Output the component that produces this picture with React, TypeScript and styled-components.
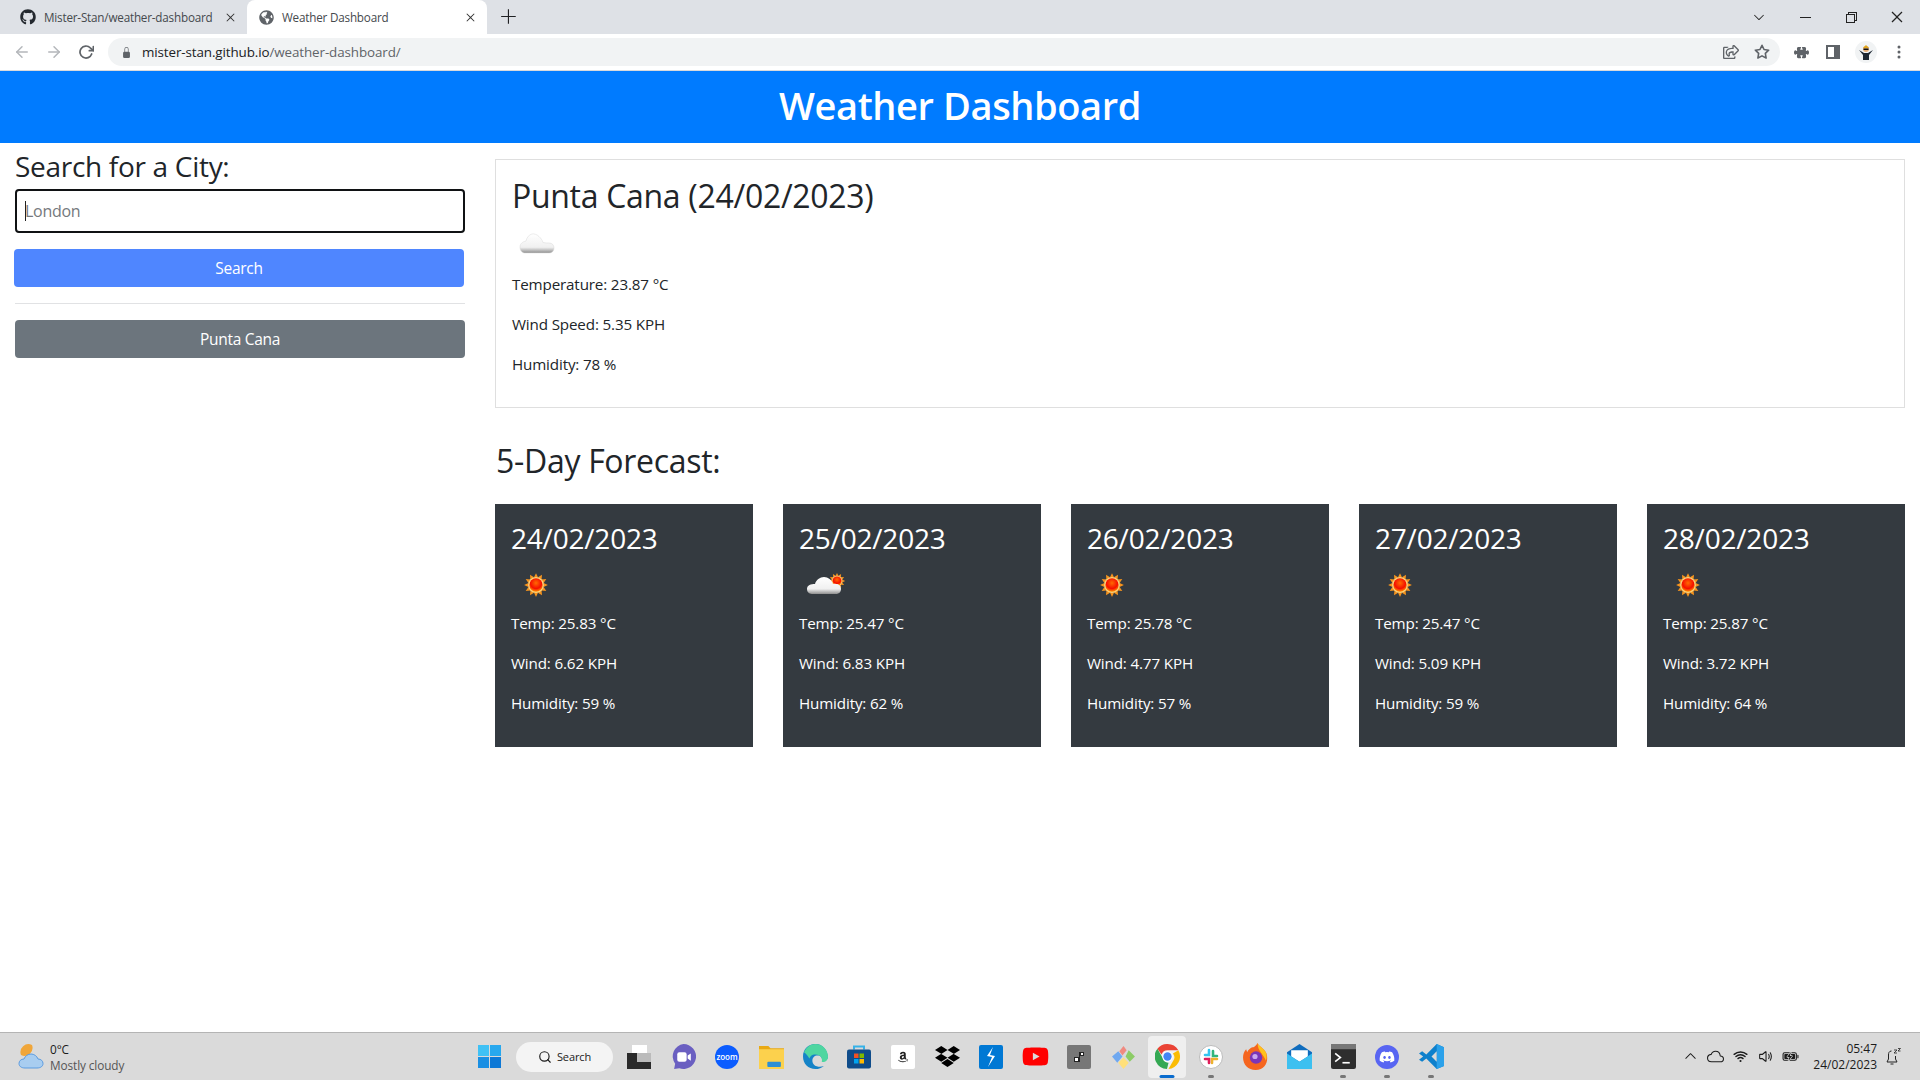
import React from 'react';
import styled, { createGlobalStyle } from 'styled-components';
import { FaGithub, FaDiscord, FaDropbox, FaYoutube, FaAmazon, FaGlobeAmericas, FaRegShareSquare } from 'react-icons/fa';
import { FiArrowLeft, FiArrowRight, FiRotateCw, FiStar, FiSearch } from 'react-icons/fi';
import { BsLockFill, BsPuzzleFill, BsThreeDotsVertical } from 'react-icons/bs';
import { VscChevronDown, VscChromeMinimize, VscChromeRestore, VscChromeClose, VscClose, VscAdd, VscChevronUp } from 'react-icons/vsc';
import { IoWifi, IoVolumeMediumOutline, IoCloudOutline, IoBatteryChargingOutline } from 'react-icons/io5';

const forecast = [
  { date: '24/02/2023', icon: 'sun', temp: '25.83', wind: '6.62', humidity: '59' },
  { date: '25/02/2023', icon: 'few', temp: '25.47', wind: '6.83', humidity: '62' },
  { date: '26/02/2023', icon: 'sun', temp: '25.78', wind: '4.77', humidity: '57' },
  { date: '27/02/2023', icon: 'sun', temp: '25.47', wind: '5.09', humidity: '59' },
  { date: '28/02/2023', icon: 'sun', temp: '25.87', wind: '3.72', humidity: '64' },
];

const GlobalStyle = createGlobalStyle`
  * { box-sizing: border-box; }
  html, body { margin: 0; padding: 0; background: #fff; }
  body {
    font-family: "Open Sans", "Noto Sans", "Liberation Sans", sans-serif;
    color: #212529;
    overflow: hidden;
  }
`;

const Screen = styled.div`
  width: 1920px;
  height: 1080px;
  display: flex;
  flex-direction: column;
`;

/* browser chrome */
const TabStrip = styled.div`
  height: 34px;
  background: #dee1e6;
  display: flex;
  align-items: flex-end;
  padding-left: 8px;
  flex: none;
`;

const Tab = styled.div<{ $active?: boolean }>`
  width: ${(p) => (p.$active ? 240 : 239)}px;
  height: 34px;
  padding: 0 9px 0 12px;
  display: flex;
  align-items: center;
  gap: 8px;
  font-size: 11.7px;
  letter-spacing: -0.2px;
  border-radius: 8px 8px 0 0;
  background: ${(p) => (p.$active ? '#fff' : 'transparent')};
  color: #45494d;
`;

const TabTitle = styled.span`
  flex: 1;
  white-space: nowrap;
  padding-bottom: 1px;
`;

const NewTab = styled.div`
  width: 44px;
  height: 34px;
  display: flex;
  align-items: center;
  justify-content: center;
  font-size: 18px;
  color: #202124;
`;

const WindowControls = styled.div`
  margin-left: auto;
  height: 34px;
  display: flex;
  align-items: center;
  color: #222;
  font-size: 16px;
`;

const WindowButton = styled.div`
  width: 46px;
  display: flex;
  justify-content: center;
`;

const Toolbar = styled.div`
  height: 37px;
  background: #fff;
  border-bottom: 1px solid #d8dadd;
  display: flex;
  align-items: center;
  padding: 0 0 0 6px;
  color: #5f6368;
  flex: none;
`;

const NavButton = styled.div<{ $muted?: boolean }>`
  width: 32px;
  display: flex;
  justify-content: center;
  font-size: 18px;
  color: ${(p) => (p.$muted ? '#b4b7bb' : '#5f6368')};
`;

const Omnibox = styled.div`
  width: 1672px;
  height: 28px;
  margin-left: 6px;
  padding: 0 10px 0 13px;
  border-radius: 14px;
  background: #f1f3f4;
  display: flex;
  align-items: center;
  font-size: 13.4px;
  letter-spacing: -0.1px;
  gap: 10px;
`;

const UrlHost = styled.span`
  color: #202124;
`;

const UrlPath = styled.span`
  color: #5f6368;
`;

const OmniActions = styled.div`
  margin-left: auto;
  display: flex;
  align-items: center;
  gap: 15px;
  font-size: 16px;
  color: #5f6368;
`;

const ToolIcons = styled.div`
  display: flex;
  align-items: center;
  margin-left: 14px;
  gap: 16px;
`;

const PanelIcon = styled.div`
  width: 14px;
  height: 14px;
  margin-left: 1px;
  background: #fff;
  border: 2px solid #5f6368;
  border-right-width: 6px;
`;

const Avatar = styled.div`
  width: 22px;
  height: 22px;
  margin: 0 -2px 0 -1px;
  border-radius: 50%;
  background: #f1f3f4;
  display: flex;
  align-items: center;
  justify-content: center;
`;

/* page */
const PageHeader = styled.header`
  height: 72px;
  padding-bottom: 4px;
  background: #007bff;
  color: #fff;
  display: flex;
  align-items: center;
  justify-content: center;
  flex: none;
`;

const PageTitle = styled.h1`
  margin: 0;
  font-size: 38px;
  font-weight: 600;
  letter-spacing: -0.4px;
`;

const Content = styled.main`
  flex: 1;
  display: flex;
  gap: 30px;
  padding: 6px 15px 0;
`;

const Sidebar = styled.aside`
  width: 450px;
  flex: none;
  display: flex;
  flex-direction: column;
`;

const SideHeading = styled.h3`
  margin: 0 0 6px;
  font-size: 28px;
  line-height: 34px;
  font-weight: 500;
  letter-spacing: -0.3px;
`;

const CityInput = styled.div`
  height: 44px;
  border: 2px solid #101214;
  border-radius: 4px;
  padding: 0 8px;
  display: flex;
  align-items: center;
  font-size: 16px;
  letter-spacing: -0.3px;
  color: #75797d;
`;

const Caret = styled.span`
  width: 1px;
  height: 20px;
  background: #222;
  margin-right: -1px;
`;

const ActionButton = styled.div<{ $bg: string; $nudge?: boolean }>`
  height: 38px;
  border-radius: 4px;
  background: ${(p) => p.$bg};
  color: #fff;
  display: flex;
  align-items: center;
  justify-content: center;
  font-size: 15.5px;
  letter-spacing: -0.3px;
  margin-left: ${(p) => (p.$nudge ? '-1px' : '0')};
  margin-right: ${(p) => (p.$nudge ? '1px' : '0')};
`;

const SearchGap = styled.div`
  height: 16px;
`;

const Rule = styled.hr`
  border: 0;
  border-top: 1px solid #e1e2e4;
  margin: 16px 0;
  height: 0;
`;

const MainColumn = styled.section`
  flex: 1;
  padding-top: 10px;
`;

const CurrentCard = styled.div`
  height: 249px;
  border: 1px solid #dfdfdf;
  padding: 16px;
`;

const CurrentTitle = styled.h2`
  margin: 1px 0 0;
  font-size: 32px;
  line-height: 38px;
  font-weight: 500;
  letter-spacing: -0.3px;
`;

const IconSlot = styled.div<{ $top: number }>`
  height: 50px;
  width: 50px;
  margin-top: ${(p) => p.$top}px;
`;

const Stat = styled.p<{ $lead?: number }>`
  margin: ${(p) => p.$lead ?? 16}px 0 0;
  font-size: 15.2px;
  line-height: 24px;
  letter-spacing: -0.15px;
`;

const ForecastHeading = styled.h3`
  margin: 34px 0 0 1px;
  font-size: 32px;
  line-height: 38px;
  font-weight: 500;
  letter-spacing: -0.3px;
`;

const ForecastRow = styled.div`
  margin-top: 24px;
  display: grid;
  grid-template-columns: repeat(5, 258px);
  gap: 30px;
`;

const ForecastCard = styled.div`
  height: 243px;
  padding: 16px;
  background: #343a40;
  color: #fff;
`;

const ForecastDate = styled.h4`
  margin: 1px 0 0;
  font-size: 28px;
  line-height: 34px;
  font-weight: 500;
  letter-spacing: -0.2px;
`;

/* taskbar */
const Taskbar = styled.footer`
  height: 48px;
  flex: none;
  background: #dadada;
  border-top: 1px solid #b4b4b4;
  display: flex;
  align-items: center;
  color: #1b1b1b;
`;

const WeatherWidget = styled.div`
  width: 478px;
  padding-left: 18px;
  display: flex;
  align-items: center;
  gap: 6px;
`;

const WidgetText = styled.div`
  font-size: 11.8px;
  line-height: 16px;
  letter-spacing: -0.1px;
`;

const WidgetSub = styled.div`
  color: #555;
`;

const SearchPill = styled.div`
  width: 97px;
  height: 30px;
  margin: 0 4px 0 15px;
  border-radius: 15px;
  background: #f4f4f4;
  display: flex;
  align-items: center;
  justify-content: center;
  gap: 5px;
  font-size: 11px;
  letter-spacing: -0.1px;
`;

const AppSlot = styled.div<{ $active?: boolean }>`
  width: 38px;
  height: 42px;
  margin: 0 3px;
  border-radius: 4px;
  background: ${(p) => (p.$active ? '#efefef' : 'transparent')};
  display: flex;
  align-items: center;
  justify-content: center;
  position: relative;
`;

const RunDot = styled.span<{ $active?: boolean }>`
  position: absolute;
  bottom: 0;
  left: 50%;
  transform: translateX(-50%);
  width: ${(p) => (p.$active ? 15 : 6)}px;
  height: 3px;
  border-radius: 2px;
  background: ${(p) => (p.$active ? '#0a6cce' : '#777')};
`;

const Tray = styled.div`
  margin-left: auto;
  display: flex;
  align-items: center;
  gap: 8px;
  padding-right: 19px;
`;

const Clock = styled.div`
  margin-left: 6px;
  font-size: 12px;
  line-height: 16px;
  text-align: right;
`;

const Swatch = styled.div<{ $bg: string; $round?: boolean }>`
  width: 24px;
  height: 24px;
  border-radius: ${(p) => (p.$round ? '50%' : '2px')};
  background: ${(p) => p.$bg};
  color: #fff;
  display: flex;
  align-items: center;
  justify-content: center;
  font-size: 8px;
  font-weight: 600;
`;

const WeatherDefs = () => (
  <defs>
    <linearGradient id="cloudFill" x1="0" y1="0" x2="0" y2="1">
      <stop offset="0" stopColor="#ffffff" />
      <stop offset="0.7" stopColor="#f0f0f0" />
      <stop offset="1" stopColor="#8f8f8f" />
    </linearGradient>
    <radialGradient id="sunFill" cx="0.5" cy="0.35" r="0.7">
      <stop offset="0" stopColor="#ff6a00" />
      <stop offset="0.6" stopColor="#f50f00" />
      <stop offset="1" stopColor="#ffb000" />
    </radialGradient>
  </defs>
);

const rays = Array.from({ length: 12 }, (_, i) => i * 30);

const Sun = ({ x, y, s }: { x: number; y: number; s: number }) => (
  <g transform={`translate(${x} ${y}) scale(${s})`}>
    {rays.map((a) => (
      <polygon key={a} points="-2.2,-8 0,-12.5 2.2,-8" fill="#f7941d" transform={`rotate(${a})`} />
    ))}
    <circle r="8.4" fill="#ffd27a" />
    <circle r="7" fill="url(#sunFill)" />
  </g>
);

const WeatherIcon = ({ kind }: { kind: string }) => (
  <svg width="50" height="50" viewBox="0 0 50 50">
    <WeatherDefs />
    {kind === 'sun' && <Sun x={25} y={25} s={0.95} />}
    {kind === 'few' && (
      <>
        <Sun x={38} y={21} s={0.65} />
        <path
          d="M14 34h22c4 0 6-2 6-5s-2-5-5-5c-1-.3-2-.3-3 0-1-4-5-7-9-7s-8 3-9 7c-4 0-8 1-8 5s3 5 6 5z"
          fill="url(#cloudFill)"
        />
      </>
    )}
    {kind === 'cloud' && (
      <path
        d="M13 33h24c3 0 5-2 5-5s-2-5-5-5c-2 0-4 0-6-.5-1-3-2-4-4-6-2-2-5-3-7-2.500-3 .8-5 3-6 7-3 .5-6 2.500-6 6s2 6 5 6z"
        fill="url(#cloudFill)"
        stroke="#d9d9d9"
        strokeWidth=".5"
      />
    )}
  </svg>
);

const WinLogo = () => (
  <svg width="23" height="23" viewBox="0 0 23 23">
    <rect x="0" y="0" width="11" height="11" fill="#3fc1f5" />
    <rect x="12" y="0" width="11" height="11" fill="#28a8ee" />
    <rect x="0" y="12" width="11" height="11" fill="#1a8fe3" />
    <rect x="12" y="12" width="11" height="11" fill="#0d78d6" />
  </svg>
);

const ChromeLogo = () => (
  <svg width="25" height="25" viewBox="0 0 24 24">
    <path d="M12 0a12 12 0 0 1 10.400 6H12a6 6 0 0 0-5.700 4.100L2.300 4.600A12 12 0 0 1 12 0z" fill="#ea4335" />
    <path d="M22.400 6A12 12 0 0 1 12.900 24l4.300-7.500A6 6 0 0 0 17.200 9z" fill="#fbbc05" />
    <path d="M2.300 4.600l5.100 8.900A5 5 0 0 0 13 17.900L11.500 24A12 12 0 0 1 2.300 4.600z" fill="#34a853" />
    <circle cx="12" cy="12" r="5" fill="#fff" />
    <circle cx="12" cy="12" r="4" fill="#4285f4" />
  </svg>
);

const EdgeLogo = () => (
  <svg width="25" height="25" viewBox="0 0 24 24">
    <path d="M12 0C5 0 0 5 0 12c0 7 5 12 12 12 3 0 6-1 8-3-5 2-11 0-11-5 0-3 2-5 5-5 3 0 4 2 4 3h6c0-8-5-14-12-14z" fill="#1583c7" />
    <path d="M1 8C3 3 7 0 12 0c7 0 12 6 12 12 0 4-3 6-6 5 1-3-1-7-6-7-4 0-5 2-6 4C4 10 2 9 1 8z" fill="#4fd6a0" />
  </svg>
);

const FolderLogo = () => (
  <svg width="25" height="25" viewBox="0 0 24 24">
    <path d="M0 2h9l2 2h13v20H0z" fill="#e9a914" />
    <rect x="0" y="5" width="24" height="19" fill="#fcd14d" />
    <rect x="8" y="17" width="13" height="5" rx="1" fill="#2d8fd5" />
  </svg>
);

const StoreLogo = () => (
  <svg width="24" height="25" viewBox="0 0 24 24">
    <path d="M7 5V2h10v3" fill="none" stroke="#37b2e8" strokeWidth="2" />
    <rect x="0" y="5" width="24" height="19" rx="2" fill="#0f4c8a" />
    <rect x="7" y="9" width="4.500" height="4.500" fill="#f25022" />
    <rect x="12.500" y="9" width="4.500" height="4.500" fill="#7fba00" />
    <rect x="7" y="14.500" width="4.500" height="4.500" fill="#00a4ef" />
    <rect x="12.500" y="14.500" width="4.500" height="4.500" fill="#ffb900" />
  </svg>
);

const MeetLogo = () => (
  <svg width="25" height="25" viewBox="0 0 24 24">
    <path d="M12 0a12 12 0 1 1-4 23.300L3 24l1-5A12 12 0 0 1 12 0z" fill="#6a5fc1" />
    <rect x="6" y="8" width="9" height="9" rx="2" fill="#fff" />
    <path d="M16 11l3-2v7l-3-2z" fill="#fff" />
  </svg>
);

const GemLogo = () => (
  <svg width="25" height="25" viewBox="0 0 24 24">
    <path d="M8 7l4-5 3 4-4 5z" fill="#f08a80" />
    <path d="M1 12l6-5 4 5-5 6z" fill="#6fa8f0" />
    <path d="M17 6l6 6-5 5-4-5z" fill="#8ccc66" />
    <path d="M7 18l5-5 5 5-5 6z" fill="#ffe07a" />
  </svg>
);

const MailLogo = () => (
  <svg width="25" height="25" viewBox="0 0 24 24">
    <path d="M0 8l12-8 12 8v16H0z" fill="#0f6cbd" />
    <path d="M4 6h16v6l-8 5-8-5z" fill="#fff" />
    <path d="M0 9l12 8 12-8v15H0z" fill="#3dc0f0" />
  </svg>
);

const TerminalLogo = () => (
  <svg width="25" height="25" viewBox="0 0 24 24">
    <rect width="24" height="24" rx="2" fill="#2e2e2e" />
    <rect width="24" height="5" fill="#777" />
    <path d="M4 9l5 4-5 4" stroke="#fff" strokeWidth="1.600" fill="none" />
    <path d="M11 18h7" stroke="#fff" strokeWidth="1.600" />
  </svg>
);

const VscodeLogo = () => (
  <svg width="25" height="25" viewBox="0 0 24 24">
    <path d="M17 0l7 3v18l-7 3-10-10-4 3-3-2 4-3-4-3 3-2 4 3z" fill="#0e80cc" />
    <path d="M17 0l7 3v18l-7 3z" fill="#2ba1ea" />
    <path d="M17 7l-5 5 5 5z" fill="#dadada" />
  </svg>
);

const TaskViewLogo = () => (
  <svg width="24" height="24" viewBox="0 0 24 24">
    <rect x="0" y="8" width="24" height="16" fill="#2a2a2a" />
    <path d="M5 0h15v8H5z" fill="#fff" />
    <path d="M10 8h14v9H10z" fill="#bbb" />
  </svg>
);

const SlackLogo = () => (
  <svg width="24" height="24" viewBox="0 0 24 24">
    <circle cx="12" cy="12" r="11.500" fill="#fff" stroke="#bbb" />
    <path d="M10 5v5H6" fill="none" stroke="#36c5f0" strokeWidth="2.600" strokeLinecap="round" />
    <path d="M14 6v5h4" fill="none" stroke="#2eb67d" strokeWidth="2.600" strokeLinecap="round" />
    <path d="M18 14h-5v4" fill="none" stroke="#ecb22e" strokeWidth="2.600" strokeLinecap="round" />
    <path d="M6 14h4v4" fill="none" stroke="#e01e5a" strokeWidth="2.600" strokeLinecap="round" />
  </svg>
);

const FirefoxLogo = () => (
  <svg width="25" height="27" viewBox="0 0 24 26">
    <path d="M14 0c1 3 6 5 8 9 3 6 1 17-10 17C5 26 0 21 0 14c0-3 1-6 3-8l1 3c1-3 4-5 6-5 1 0 3-2 4-4z" fill="#f5651f" />
    <path d="M14 0c1 3 6 5 8 9 1 3 1 6 0 8-2-6-8-9-8-17z" fill="#ffc21c" />
    <circle cx="12.500" cy="14" r="6" fill="#7a35b8" />
    <circle cx="11.500" cy="13" r="2.500" fill="#c9a6f0" />
  </svg>
);

const StanLogo = () => (
  <Swatch $bg="#0078d4">
    <svg width="12" height="20" viewBox="0 0 12 20">
      <path d="M8 0L2 9l5 1-4 10 7-11-5-1z" fill="#fff" />
    </svg>
  </Swatch>
);

const GreyLogo = () => (
  <Swatch $bg="#777">
    <svg width="10" height="10" viewBox="0 0 10 10">
      <path d="M0 5h5V0h5v4H6v6H0z" fill="#222" />
      <path d="M1 6h3v3H1zM7 1h2v2H7z" fill="#fff" />
    </svg>
  </Swatch>
);

const SnoozeBell = () => (
  <svg width="16" height="18" viewBox="0 0 16 18" fill="none" stroke="#222" strokeWidth="1">
    <path d="M6.500 3C4 3 3.500 5 3.500 7v4L2 14h10l-1.500-3V8" />
    <path d="M5.500 16h3" />
    <path d="M9 2h3l-3 3h3M13 .5h2.500L13 3h2.500" strokeWidth=".8" />
  </svg>
);

const apps: { key: string; node: React.ReactNode; dot?: boolean; active?: boolean }[] = [
  { key: 'taskview', node: <TaskViewLogo /> },
  { key: 'meet', node: <MeetLogo /> },
  { key: 'zoom', node: <Swatch $bg="#0b5cff" $round>zoom</Swatch> },
  { key: 'folder', node: <FolderLogo /> },
  { key: 'edge', node: <EdgeLogo /> },
  { key: 'store', node: <StoreLogo /> },
  { key: 'amazon', node: <Swatch $bg="#fff"><FaAmazon size={12} color="#222" /></Swatch> },
  { key: 'dropbox', node: <FaDropbox size={25} color="#000" /> },
  { key: 'stan', node: <StanLogo /> },
  { key: 'youtube', node: <FaYoutube size={27} color="#f00" /> },
  { key: 'grey', node: <GreyLogo /> },
  { key: 'gem', node: <GemLogo /> },
  { key: 'chrome', node: <ChromeLogo />, active: true, dot: true },
  { key: 'slack', node: <SlackLogo />, dot: true },
  { key: 'firefox', node: <FirefoxLogo /> },
  { key: 'mail', node: <MailLogo /> },
  { key: 'term', node: <TerminalLogo />, dot: true },
  { key: 'discord', node: <Swatch $bg="#5865f2" $round><FaDiscord size={16} /></Swatch>, dot: true },
  { key: 'vscode', node: <VscodeLogo />, dot: true },
];

const App = () => (
  <Screen>
    <GlobalStyle />
    <TabStrip>
      <Tab>
        <FaGithub size={16} color="#24292f" />
        <TabTitle>Mister-Stan/weather-dashboard</TabTitle>
        <VscClose size={15} color="#333" />
      </Tab>
      <Tab $active>
        <FaGlobeAmericas size={15} color="#5f6368" />
        <TabTitle>Weather Dashboard</TabTitle>
        <VscClose size={15} color="#333" />
      </Tab>
      <NewTab><VscAdd /></NewTab>
      <WindowControls>
        <WindowButton><VscChevronDown /></WindowButton>
        <WindowButton><VscChromeMinimize /></WindowButton>
        <WindowButton><VscChromeRestore /></WindowButton>
        <WindowButton><VscChromeClose /></WindowButton>
      </WindowControls>
    </TabStrip>
    <Toolbar>
      <NavButton $muted><FiArrowLeft /></NavButton>
      <NavButton $muted><FiArrowRight /></NavButton>
      <NavButton><FiRotateCw strokeWidth={2.6} size={16} /></NavButton>
      <Omnibox>
        <BsLockFill size={11} color="#5f6368" />
        <span>
          <UrlHost>mister-stan.github.io</UrlHost>
          <UrlPath>/weather-dashboard/</UrlPath>
        </span>
        <OmniActions>
          <FaRegShareSquare />
          <FiStar strokeWidth={2.4} />
        </OmniActions>
      </Omnibox>
      <ToolIcons>
        <BsPuzzleFill size={15} />
        <PanelIcon />
        <Avatar>
          <svg width="16" height="16" viewBox="0 0 16 16">
            <path d="M1 6l5 3h4l5-3-4 5v5H5v-5z" fill="#1d2733" />
            <circle cx="8" cy="5" r="3" fill="#e9b27c" />
            <path d="M5 4l3-3 3 3z" fill="#e0a61c" />
            <rect x="5.500" y="4.500" width="5" height="1.500" fill="#111" />
          </svg>
        </Avatar>
        <BsThreeDotsVertical size={16} />
      </ToolIcons>
    </Toolbar>

    <PageHeader>
      <PageTitle>Weather Dashboard</PageTitle>
    </PageHeader>

    <Content>
      <Sidebar>
        <SideHeading>Search for a City:</SideHeading>
        <CityInput><Caret />London</CityInput>
        <SearchGap />
        <ActionButton $bg="#4f86ff" $nudge>Search</ActionButton>
        <Rule />
        <ActionButton $bg="#6c757d">Punta Cana</ActionButton>
      </Sidebar>
      <MainColumn>
        <CurrentCard>
          <CurrentTitle>Punta Cana (24/02/2023)</CurrentTitle>
          <IconSlot $top={5}><WeatherIcon kind="cloud" /></IconSlot>
          <Stat $lead={2}>Temperature: 23.87 °C</Stat>
          <Stat>Wind Speed: 5.35 KPH</Stat>
          <Stat>Humidity: 78 %</Stat>
        </CurrentCard>
        <ForecastHeading>5-Day Forecast:</ForecastHeading>
        <ForecastRow>
          {forecast.map((day) => (
            <ForecastCard key={day.date}>
              <ForecastDate>{day.date}</ForecastDate>
              <IconSlot $top={5}><WeatherIcon kind={day.icon} /></IconSlot>
              <Stat $lead={1}>Temp: {day.temp} °C</Stat>
              <Stat>Wind: {day.wind} KPH</Stat>
              <Stat>Humidity: {day.humidity} %</Stat>
            </ForecastCard>
          ))}
        </ForecastRow>
      </MainColumn>
    </Content>

    <Taskbar>
      <WeatherWidget>
        <svg width="26" height="26" viewBox="0 0 26 26">
          <path d="M14 1a8 8 0 0 0-11 10 8 8 0 0 0 11-10z" fill="#f0a63a" />
          <path d="M7 24c-4 0-6-2-6-4.500S3 15 6 15c1-3 4-5 7-5s6 2 7 5c3 0 5 2 5 4.500S23 24 19 24z" fill="#a8cdf0" stroke="#5b9be0" />
        </svg>
        <WidgetText>
          0°C
          <WidgetSub>Mostly cloudy</WidgetSub>
        </WidgetText>
      </WeatherWidget>
      <WinLogo />
      <SearchPill>
        <FiSearch size={14} />
        Search
      </SearchPill>
      {apps.map((app) => (
        <AppSlot key={app.key} $active={app.active}>
          {app.node}
          {app.dot && <RunDot $active={app.active} />}
        </AppSlot>
      ))}
      <Tray>
        <VscChevronUp size={17} />
        <IoCloudOutline size={17} />
        <IoWifi size={17} />
        <IoVolumeMediumOutline size={17} />
        <IoBatteryChargingOutline size={17} />
        <Clock>
          05:47
          <div>24/02/2023</div>
        </Clock>
        <SnoozeBell />
      </Tray>
    </Taskbar>
  </Screen>
);

export default App;
